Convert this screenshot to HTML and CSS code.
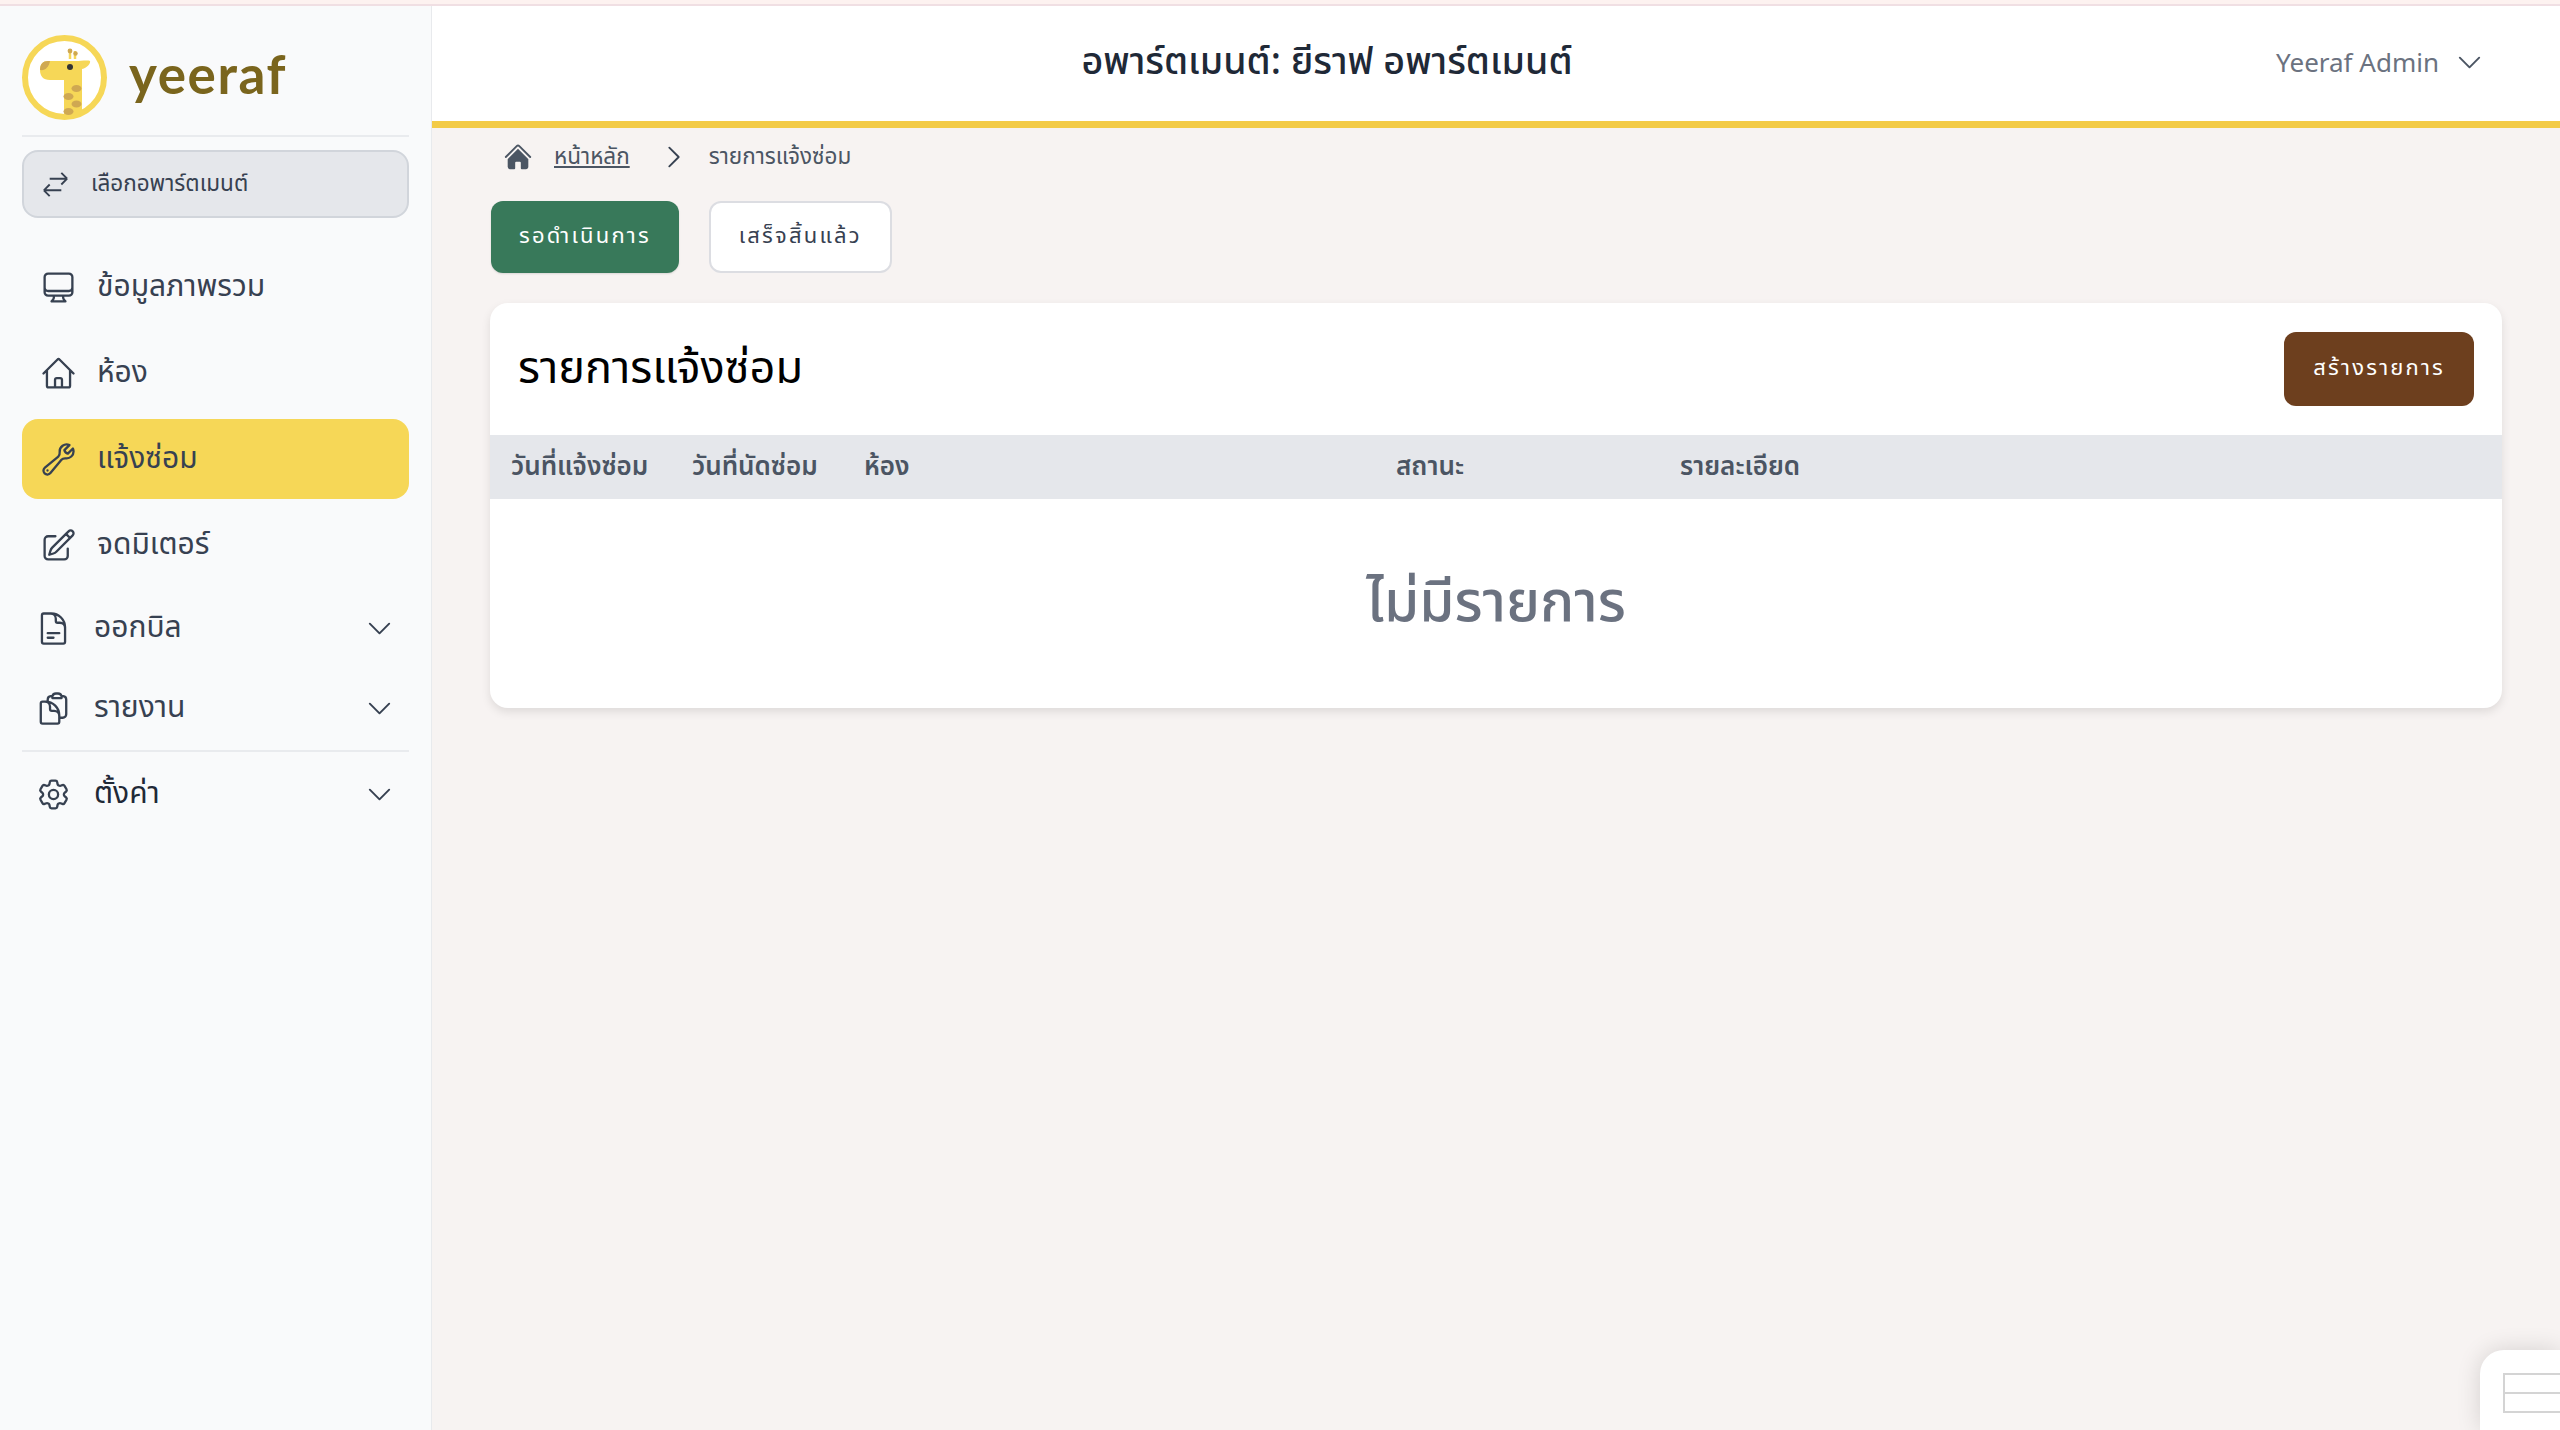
FILE: index.html
```html
<!DOCTYPE html>
<html lang="th">
<head>
<meta charset="utf-8">
<title>รายการแจ้งซ่อม</title>
<link rel="stylesheet" href="styles.css">
</head>
<body>
<div class="strip"></div>
<div class="app">
  <aside class="sidebar">
    <div class="brand">
      <svg class="logo" viewBox="0 0 85 85">
        <defs><clipPath id="ring"><circle cx="42.5" cy="42.5" r="40"/></clipPath></defs>
        <circle cx="42.5" cy="42.5" r="39.5" fill="#fff" stroke="#f6d757" stroke-width="6"/>
        <g clip-path="url(#ring)">
          <path d="M48 24 V14 M53 24 V16" stroke="#f6d757" stroke-width="2.5"/>
          <circle cx="48" cy="16" r="2.4" fill="#cfa852"/><circle cx="53.5" cy="18.5" r="2.2" fill="#cfa852"/>
          <path d="M26 26 H54 C58 26 66 25 68 26 C69 29 63 34 60 34 V90 H42 V45 H28 C21 45 18 41 18 35 C18 29 21 26 26 26 Z" fill="#f6d757"/>
          <path d="M26 26 C21 26 18 29 18 35 C23 36 27 32 28 26 Z" fill="#cfa852"/>
          <circle cx="48" cy="32" r="3" fill="#333"/>
          <ellipse cx="54.5" cy="53.5" rx="5" ry="3.5" fill="#cfa852"/>
          <ellipse cx="46.5" cy="61.5" rx="5" ry="3.5" fill="#cfa852"/>
          <ellipse cx="54.5" cy="69" rx="5" ry="3.5" fill="#cfa852"/>
          <ellipse cx="46.5" cy="76.5" rx="5" ry="3.5" fill="#cfa852"/>
        </g>
      </svg>
      <span class="brand-name">yeeraf</span>
    </div>
    <button class="switcher">
      <svg class="ico-switch" viewBox="0 0 24 24"><path d="M7.5 21L3 16.5m0 0L7.5 12M3 16.5h13.5m0-13.5L21 7.5m0 0L16.5 12M21 7.5H7.5"/></svg>
      <span>เลือกอพาร์ตเมนต์</span>
    </button>
    <nav class="nav">
      <a class="nav-item">
        <svg class="ico" viewBox="0 0 24 24"><path d="M9 17.25v1.007a3 3 0 01-.879 2.122L7.5 21h9l-.621-.621A3 3 0 0115 18.257V17.25m6-12V15a2.25 2.25 0 01-2.25 2.25H5.25A2.25 2.25 0 013 15V5.25m18 0A2.25 2.25 0 0018.75 3H5.25A2.25 2.25 0 003 5.25m18 0V12a2.25 2.25 0 01-2.25 2.25H5.25A2.25 2.25 0 013 12V5.25"/></svg>
        <span>ข้อมูลภาพรวม</span>
      </a>
      <a class="nav-item">
        <svg class="ico" viewBox="0 0 24 24"><path d="M2.25 12l8.954-8.955c.44-.439 1.152-.439 1.591 0L21.75 12M4.5 9.75v10.125c0 .621.504 1.125 1.125 1.125H9.75v-4.875c0-.621.504-1.125 1.125-1.125h2.25c.621 0 1.125.504 1.125 1.125V21h4.125c.621 0 1.125-.504 1.125-1.125V9.75M8.25 21h8.25"/></svg>
        <span>ห้อง</span>
      </a>
      <a class="nav-item active">
        <svg class="ico" viewBox="0 0 24 24"><path d="M21.75 6.75a4.5 4.5 0 01-4.884 4.484c-1.076-.091-2.264.071-2.95.904l-7.152 8.684a2.548 2.548 0 11-3.586-3.586l8.684-7.152c.833-.686.995-1.874.904-2.95a4.5 4.5 0 016.336-4.486l-3.276 3.276a3.004 3.004 0 002.25 2.25l3.276-3.276c.256.565.398 1.192.398 1.852z"/><path d="M4.867 19.125h.008v.008h-.008v-.008z"/></svg>
        <span>แจ้งซ่อม</span>
      </a>
      <a class="nav-item">
        <svg class="ico" viewBox="0 0 24 24"><path d="M16.862 4.487l1.687-1.688a1.875 1.875 0 112.652 2.652L10.582 16.07a4.5 4.5 0 01-1.897 1.13L6 18l.8-2.685a4.5 4.5 0 011.13-1.897l8.932-8.931zm0 0L19.5 7.125M18 14v4.75A2.25 2.25 0 0115.75 21H5.25A2.25 2.25 0 013 18.75V8.25A2.25 2.25 0 015.25 6H10"/></svg>
        <span>จดมิเตอร์</span>
      </a>
    </nav>
    <div class="group">
      <a class="group-item">
        <svg class="ico" viewBox="0 0 24 24"><path d="M19.5 14.25v-2.625a3.375 3.375 0 00-3.375-3.375h-1.5A1.125 1.125 0 0113.5 7.125v-1.5a3.375 3.375 0 00-3.375-3.375H8.25m0 12.75h7.5m-7.5 3H12M10.5 2.25H5.625c-.621 0-1.125.504-1.125 1.125v17.25c0 .621.504 1.125 1.125 1.125h12.75c.621 0 1.125-.504 1.125-1.125V11.25a9 9 0 00-9-9z"/></svg>
        <span class="grow">ออกบิล</span>
        <svg class="ico-chev" viewBox="0 0 24 24"><path d="M19.5 8.25l-7.5 7.5-7.5-7.5"/></svg>
      </a>
      <a class="group-item">
        <svg class="ico" viewBox="0 0 24 24"><path d="M8.25 7.5V6.108c0-1.135.845-2.098 1.976-2.192.373-.03.748-.057 1.123-.08M15.75 18H18a2.25 2.25 0 002.25-2.25V6.108c0-1.135-.845-2.098-1.976-2.192a48.424 48.424 0 00-1.123-.08M15.75 18.75v-1.875a3.375 3.375 0 00-3.375-3.375h-1.5a1.125 1.125 0 01-1.125-1.125v-1.5A3.375 3.375 0 006.375 7.5H5.25m11.9-3.664A2.251 2.251 0 0015 2.25h-1.5a2.251 2.251 0 00-2.15 1.586m5.8 0c.065.21.1.433.1.664v.75h-6V4.5c0-.231.035-.454.1-.664M6.75 7.5H4.875c-.621 0-1.125.504-1.125 1.125v12c0 .621.504 1.125 1.125 1.125h9.75c.621 0 1.125-.504 1.125-1.125V16.5a9 9 0 00-9-9z"/></svg>
        <span class="grow">รายงาน</span>
        <svg class="ico-chev" viewBox="0 0 24 24"><path d="M19.5 8.25l-7.5 7.5-7.5-7.5"/></svg>
      </a>
      <hr class="rule">
      <a class="group-item">
        <svg class="ico" viewBox="0 0 24 24"><path d="M9.594 3.94c.09-.542.56-.94 1.11-.94h2.593c.55 0 1.02.398 1.11.94l.213 1.281c.063.374.313.686.645.87.074.04.147.083.22.127.324.196.72.257 1.075.124l1.217-.456a1.125 1.125 0 011.37.49l1.296 2.247a1.125 1.125 0 01-.26 1.431l-1.003.827c-.293.24-.438.613-.431.992a6.759 6.759 0 010 .255c-.007.378.138.75.43.99l1.005.828c.424.35.534.954.26 1.43l-1.298 2.247a1.125 1.125 0 01-1.369.491l-1.217-.456c-.355-.133-.75-.072-1.076.124a6.57 6.57 0 01-.22.128c-.331.183-.581.495-.644.869l-.213 1.28c-.09.543-.56.941-1.11.941h-2.594c-.55 0-1.02-.398-1.11-.94l-.213-1.281c-.062-.374-.312-.686-.644-.87a6.52 6.52 0 01-.22-.127c-.325-.196-.72-.257-1.076-.124l-1.217.456a1.125 1.125 0 01-1.369-.49l-1.297-2.247a1.125 1.125 0 01.26-1.431l1.004-.827c.292-.24.437-.613.43-.992a6.932 6.932 0 010-.255c.007-.378-.138-.75-.43-.99l-1.004-.828a1.125 1.125 0 01-.26-1.43l1.297-2.247a1.125 1.125 0 011.37-.491l1.216.456c.356.133.751.072 1.076-.124.072-.044.146-.087.22-.128.332-.183.582-.495.644-.869l.214-1.281z"/><path d="M15 12a3 3 0 11-6 0 3 3 0 016 0z"/></svg>
        <span class="grow dark">ตั้งค่า</span>
        <svg class="ico-chev" viewBox="0 0 24 24"><path d="M19.5 8.25l-7.5 7.5-7.5-7.5"/></svg>
      </a>
    </div>
  </aside>
  <div class="content">
    <header class="topbar">
      <h1 class="apt-title">อพาร์ตเมนต์: ยีราฟ อพาร์ตเมนต์</h1>
      <div class="user">
        <span>Yeeraf Admin</span>
        <svg class="ico-chev" viewBox="0 0 24 24"><path d="M19.5 8.25l-7.5 7.5-7.5-7.5"/></svg>
      </div>
    </header>
    <main class="main">
      <div class="crumbs">
        <svg class="crumb-home" viewBox="0 0 24 24"><path d="M11.47 3.84a.75.75 0 011.06 0l8.69 8.69a.75.75 0 101.06-1.06l-8.689-8.69a2.25 2.25 0 00-3.182 0l-8.69 8.69a.75.75 0 001.061 1.06l8.69-8.69z"/><path d="M12 5.432l8.159 8.159c.03.03.06.058.091.086v6.198c0 1.035-.84 1.875-1.875 1.875H15a.75.75 0 01-.75-.75v-4.5a.75.75 0 00-.75-.75h-3a.75.75 0 00-.75.75V21a.75.75 0 01-.75.75H5.625a1.875 1.875 0 01-1.875-1.875v-6.198a2.29 2.29 0 00.091-.086L12 5.432z"/></svg>
        <a class="crumb-link">หน้าหลัก</a>
        <svg class="crumb-sep" viewBox="0 0 24 24"><path d="M8.25 4.5l7.5 7.5-7.5 7.5"/></svg>
        <span>รายการแจ้งซ่อม</span>
      </div>
      <div class="tabs">
        <button class="tab tab-on">รอดำเนินการ</button>
        <button class="tab tab-off">เสร็จสิ้นแล้ว</button>
      </div>
      <section class="card">
        <div class="card-head">
          <h2 class="card-title">รายการแจ้งซ่อม</h2>
          <button class="create">สร้างรายการ</button>
        </div>
        <div class="thead">
          <span>วันที่แจ้งซ่อม</span>
          <span>วันที่นัดซ่อม</span>
          <span>ห้อง</span>
          <span>สถานะ</span>
          <span>รายละเอียด</span>
        </div>
        <div class="empty">ไม่มีรายการ</div>
      </section>
    </main>
  </div>
</div>
<div class="widget"><div class="widget-lines"></div></div>
</body>
</html>
```
FILE: styles.css
```css
* { box-sizing: border-box; }
html, body { margin: 0; height: 100%; overflow: hidden; }
body {
  font-family: "Noto Sans", "Noto Sans Thai", "Open Sans", sans-serif;
  background: #f7f3f2;
  color: #374151;
  position: relative;
}
.strip { height: 6px; background: #fdf2f0; border-bottom: 2px solid #f0dfe3; }
.app { display: flex; height: 1424px; }

.sidebar {
  width: 432px;
  flex: none;
  background: #f9fafb;
  border-right: 1px solid #e8eaed;
  padding: 0 22px;
}
.brand {
  height: 131px;
  padding-top: 29px;
  display: flex;
  align-items: flex-start;
  gap: 22px;
  border-bottom: 2px solid #e9ebee;
}
.logo { width: 85px; height: 85px; flex: none; }
.brand-name {
  font-family: "Lato", sans-serif;
  font-weight: 700;
  font-size: 53px;
  letter-spacing: 1.6px;
  line-height: 78px;
  color: #7a651d;
}
.switcher {
  margin-top: 13px;
  width: 100%;
  height: 68px;
  display: flex;
  align-items: center;
  gap: 20px;
  padding: 0 16px;
  background: #e5e7eb;
  border: 2px solid #d1d5db;
  border-radius: 16px;
  font: inherit;
  font-size: 22.5px;
  color: #374151;
}
.ico-switch { width: 31px; height: 31px; fill: none; stroke: #374151; stroke-width: 1.5; }
.nav { margin-top: 29px; display: flex; flex-direction: column; gap: 6px; }
.nav-item {
  height: 80px;
  display: flex;
  align-items: center;
  gap: 20px;
  padding-left: 18px;
  border-radius: 16px;
  font-size: 30px;
  color: #374151;
}
.active { background: #f6d757; }
.ico { width: 37px; height: 37px; flex: none; fill: none; stroke: #374151; stroke-width: 1.5; stroke-linecap: round; stroke-linejoin: round; }
.group { margin-top: 3px; }
.group-item {
  height: 80px;
  display: flex;
  align-items: center;
  gap: 22px;
  padding: 0 14px 0 13px;
  font-size: 30px;
  color: #374151;
}
.grow { flex: 1; }
.dark { color: #1f2937; }
.ico-chev { width: 31px; height: 31px; flex: none; fill: none; stroke: #374151; stroke-width: 1.5; stroke-linecap: round; stroke-linejoin: round; }
.rule { margin: 2px 0; border: 0; border-top: 2px solid #e9ebee; height: 0; }

.content { flex: 1; min-width: 0; display: flex; flex-direction: column; }
.topbar {
  height: 122px;
  flex: none;
  padding-bottom: 3px;
  background: #fff;
  border-bottom: 7px solid #f3cb47;
  display: flex;
  align-items: center;
}
.apt-title {
  flex: 1;
  margin: 0;
  text-align: center;
  font-size: 37.6px;
  font-weight: 500;
  color: #1f2937;
}
.user {
  width: 338px;
  flex: none;
  padding-right: 75px;
  display: flex;
  justify-content: flex-end;
  align-items: center;
  gap: 15px;
  font-size: 26px;
  color: #6b7280;
}
.user .ico-chev { stroke: #4b5563; }

.main { flex: 1; padding: 0 58px; }
.crumbs {
  height: 57px;
  padding-left: 13px;
  display: flex;
  align-items: center;
  font-size: 22.5px;
  color: #4b5563;
}
.crumb-home { width: 30px; height: 30px; fill: #4b5563; flex: none; }
.crumb-link { margin-left: 21px; text-decoration: underline; }
.crumb-sep { width: 30px; height: 30px; margin: 0 20px 0 29px; fill: none; stroke: #374151; stroke-width: 1.5; stroke-linecap: round; stroke-linejoin: round; flex: none; }
.tabs { margin-top: 16px; display: flex; gap: 30px; padding-left: 1px; }
.tab {
  height: 72px;
  padding: 0 28px 2px;
  border-radius: 12px;
  font: inherit;
  font-size: 22px;
  letter-spacing: 2.2px;
}
.tab-on { background: #38795a; border: 0; color: #fff; box-shadow: 0 1px 2px rgba(0,0,0,.12); }
.tab-off { background: #fff; border: 2px solid #dcdde2; color: #374151; }
.card {
  margin-top: 30px;
  height: 405px;
  background: #fff;
  border-radius: 18px;
  box-shadow: 0 4px 10px rgba(0,0,0,.1);
  overflow: hidden;
}
.card-head {
  height: 132px;
  padding: 0 28px;
  display: flex;
  justify-content: space-between;
  align-items: center;
}
.card-title { margin: 0; font-size: 45px; font-weight: 400; color: #000; }
.create {
  height: 74px;
  padding: 0 29px 2px;
  background: #6d3f1e;
  border: 0;
  border-radius: 12px;
  font: inherit;
  font-size: 22px;
  letter-spacing: 2.2px;
  color: #fff;
}
.thead {
  height: 64px;
  padding: 0 21px;
  display: grid;
  grid-template-columns: 181px 172px 532px 284px 1fr;
  align-items: center;
  background: #e5e7eb;
  font-size: 26px;
  font-weight: 600;
  color: #4b5563;
}
.empty {
  height: 209px;
  display: flex;
  align-items: center;
  justify-content: center;
  font-size: 56.5px;
  font-weight: 500;
  color: #6b7280;
}
.widget {
  position: absolute;
  right: 0;
  bottom: 0;
  width: 80px;
  height: 80px;
  padding: 23px 0 0 23px;
  background: #fff;
  border-radius: 24px 0 0 0;
  box-shadow: 0 0 24px rgba(0,0,0,.14);
}
.widget-lines {
  height: 40px;
  border: 2px solid #d4d4d4;
  border-right: 0;
  background: linear-gradient(#d4d4d4, #d4d4d4) 0 17px / 100% 2px no-repeat;
}
```
